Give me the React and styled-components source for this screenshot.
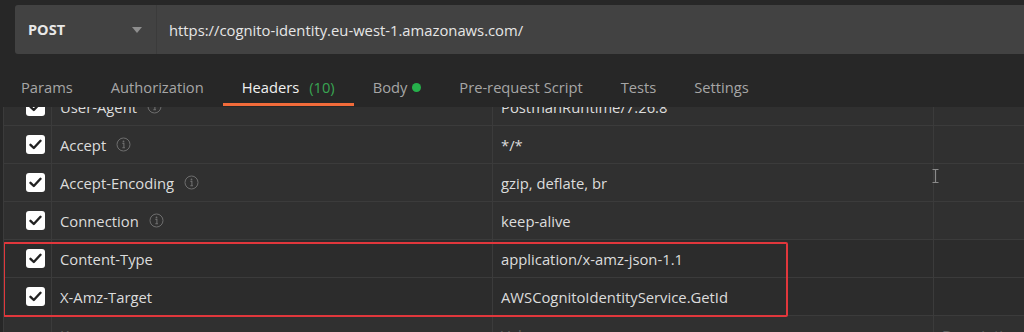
import React from 'react';
import styled, { createGlobalStyle } from 'styled-components';

const GlobalStyle = createGlobalStyle`
  html, body {
    margin: 0;
    padding: 0;
    background: #272727;
    font-family: "Open Sans", "Noto Sans", sans-serif;
  }
`;

const Page = styled.div`
  position: relative;
  width: 1024px;
  height: 332px;
  overflow: hidden;
  display: flex;
  flex-direction: column;
  background: #272727;
`;

const TopBar = styled.div`
  height: 62px;
  box-sizing: border-box;
  padding: 5px 0 0 15px;
`;

const UrlBar = styled.div`
  height: 49px;
  display: flex;
  background: #424242;
  border-radius: 3px 0 0 3px;
`;

const MethodSelect = styled.div`
  width: 142px;
  box-sizing: border-box;
  display: flex;
  align-items: center;
  justify-content: space-between;
  padding: 0 14px 0 13px;
  border-right: 1px solid #3b3b3b;
  color: #e8e8e8;
  font-weight: 700;
  font-size: 14.5px;
`;

const Caret = styled.span`
  width: 0;
  height: 0;
  border-left: 5px solid transparent;
  border-right: 5px solid transparent;
  border-top: 6px solid #8e8e8e;
`;

const UrlText = styled.div`
  display: flex;
  align-items: center;
  padding-left: 12px;
  color: #e6e6e6;
  font-size: 14.8px;
`;

const Tabs = styled.div`
  height: 45px;
  box-sizing: border-box;
  display: flex;
  padding: 0 0 1px 2px;
`;

const Tab = styled.div`
  display: flex;
  align-items: center;
  gap: 5px;
  box-sizing: border-box;
  padding: 8px 19px 0;
  border-bottom: 3px solid ${p => (p.$active ? '#f26b3a' : 'transparent')};
  color: ${p => (p.$active ? '#f0f0f0' : '#a6a6a6')};
  font-size: 14.7px;
`;

const Count = styled.span`
  margin-left: 5px;
  color: #39a552;
`;

const Dot = styled.span`
  width: 9px;
  height: 9px;
  border-radius: 50%;
  background: #26b14b;
  margin-top: 1px;
`;

const Viewport = styled.div`
  flex: 1;
  overflow: hidden;
  margin-left: 3px;
  background: #303030;
  border-left: 1px solid #3b3b3b;
`;

const Table = styled.div`
  margin-top: -19px;
`;

const Row = styled.div`
  display: grid;
  grid-template-columns: 48px 441px 441px 1fr;
  height: 38px;
  box-sizing: border-box;
  border-bottom: 1px solid #3b3b3b;
  background: ${p => (p.$dim ? '#2c2c2c' : 'transparent')};
`;

const Cell = styled.div`
  display: flex;
  align-items: center;
  gap: 10px;
  padding-left: 8px;
  border-right: ${p => (p.$last ? 'none' : '1px solid #3b3b3b')};
  color: ${p => (p.$placeholder ? '#5f5f5f' : '#dcdcdc')};
  font-size: 14.8px;
  white-space: nowrap;
`;

const CheckCell = styled.div`
  display: flex;
  align-items: center;
  justify-content: flex-end;
  padding-right: 6px;
  border-right: 1px solid #3b3b3b;
`;

const Checkbox = styled.div`
  width: 19px;
  height: 19px;
  border-radius: 3px;
  background: #ffffff;
  display: flex;
  align-items: center;
  justify-content: center;
`;

const Highlight = styled.div`
  position: relative;

  &::after {
    content: '';
    position: absolute;
    left: -1px;
    top: 2px;
    bottom: -1px;
    width: 785px;
    box-sizing: border-box;
    border: 2px solid #e1373c;
    border-radius: 2px;
    pointer-events: none;
  }
`;

const Cursor = styled.svg`
  position: absolute;
  left: 932px;
  top: 169px;
`;

const Check = () => (
  <Checkbox>
    <svg width="13" height="11" viewBox="0 0 13 11">
      <path d="M1.5 5.8 L4.8 9 L11.5 1.8" fill="none" stroke="#222" strokeWidth="2.4" strokeLinecap="round" strokeLinejoin="round" />
    </svg>
  </Checkbox>
);

const Info = () => (
  <svg width="15" height="15" viewBox="0 0 15 15">
    <circle cx="7.5" cy="7.5" r="6.5" fill="none" stroke="#6e6e6e" strokeWidth="1" />
    <circle cx="7.5" cy="4.4" r="0.9" fill="#6e6e6e" />
    <path d="M6.4 6.4 H7.9 V10.8 M6.3 10.8 H9" fill="none" stroke="#6e6e6e" strokeWidth="1.1" />
  </svg>
);

const headers = [
  { key: 'User-Agent', value: 'PostmanRuntime/7.26.8', info: true },
  { key: 'Accept', value: '*/*', info: true },
  { key: 'Accept-Encoding', value: 'gzip, deflate, br', info: true },
  { key: 'Connection', value: 'keep-alive', info: true },
];

const marked = [
  { key: 'Content-Type', value: 'application/x-amz-json-1.1' },
  { key: 'X-Amz-Target', value: 'AWSCognitoIdentityService.GetId' },
];

const HeaderRow = ({ h, dim }) => (
  <Row $dim={dim}>
    <CheckCell><Check /></CheckCell>
    <Cell>{h.key}{h.info && <Info />}</Cell>
    <Cell>{h.value}</Cell>
    <Cell $last />
  </Row>
);

const tabs = ['Params', 'Authorization', 'Headers', 'Body', 'Pre-request Script', 'Tests', 'Settings'];

const App = () => {
  return (
    <Page>
      <GlobalStyle />
      <TopBar>
        <UrlBar>
          <MethodSelect>POST<Caret /></MethodSelect>
          <UrlText>https://cognito-identity.eu-west-1.amazonaws.com/</UrlText>
        </UrlBar>
      </TopBar>
      <Tabs>
        {tabs.map(t => (
          <Tab key={t} $active={t === 'Headers'}>
            {t}
            {t === 'Headers' && <Count>(10)</Count>}
            {t === 'Body' && <Dot />}
          </Tab>
        ))}
      </Tabs>
      <Viewport>
        <Table>
          {headers.map(h => <HeaderRow key={h.key} h={h} />)}
          <Highlight>
            {marked.map(h => <HeaderRow key={h.key} h={h} dim />)}
          </Highlight>
          <Row>
            <CheckCell />
            <Cell $placeholder>Key</Cell>
            <Cell $placeholder>Value</Cell>
            <Cell $placeholder $last>Description</Cell>
          </Row>
        </Table>
      </Viewport>
      <Cursor width="7" height="14" viewBox="0 0 7 14">
        <path d="M0.5 0.5 H6.5 M3.5 0.5 V13.5 M0.5 13.5 H6.5" stroke="#8a8a8a" strokeWidth="1.2" fill="none" />
      </Cursor>
    </Page>
  );
};

export default App;
